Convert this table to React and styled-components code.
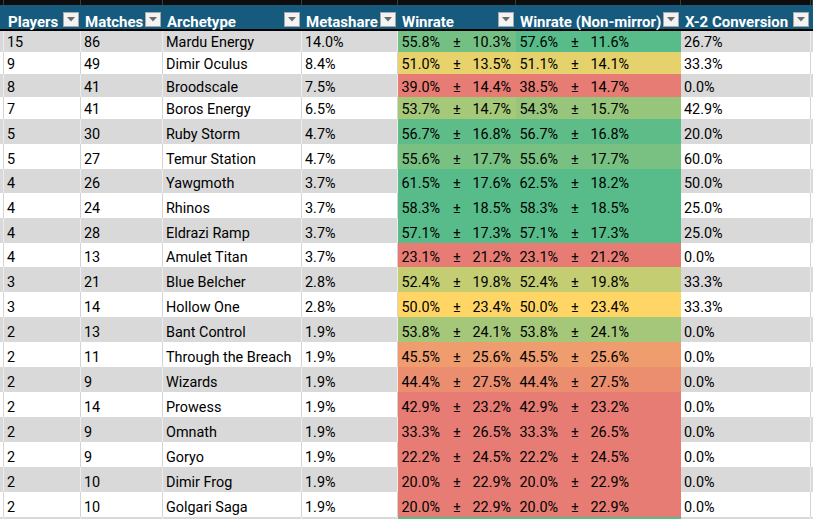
import React from "react"
import styled, { createGlobalStyle } from "styled-components"

const COLS = "4px 77px 82px 139px 96px 118px 165px 130px 1fr"

const HEADERS = [
  "Players",
  "Matches",
  "Archetype",
  "Metashare",
  "Winrate",
  "Winrate (Non-mirror)",
  "X-2 Conversion"
]

// players, matches, archetype, share, wr, wrErr, nm, nmErr, conversion
const ROWS = [
  [15, 86, "Mardu Energy", "14.0%", 55.8, 10.3, 57.6, 11.6, "26.7%"],
  [9, 49, "Dimir Oculus", "8.4%", 51.0, 13.5, 51.1, 14.1, "33.3%"],
  [8, 41, "Broodscale", "7.5%", 39.0, 14.4, 38.5, 14.7, "0.0%"],
  [7, 41, "Boros Energy", "6.5%", 53.7, 14.7, 54.3, 15.7, "42.9%"],
  [5, 30, "Ruby Storm", "4.7%", 56.7, 16.8, 56.7, 16.8, "20.0%"],
  [5, 27, "Temur Station", "4.7%", 55.6, 17.7, 55.6, 17.7, "60.0%"],
  [4, 26, "Yawgmoth", "3.7%", 61.5, 17.6, 62.5, 18.2, "50.0%"],
  [4, 24, "Rhinos", "3.7%", 58.3, 18.5, 58.3, 18.5, "25.0%"],
  [4, 28, "Eldrazi Ramp", "3.7%", 57.1, 17.3, 57.1, 17.3, "25.0%"],
  [4, 13, "Amulet Titan", "3.7%", 23.1, 21.2, 23.1, 21.2, "0.0%"],
  [3, 21, "Blue Belcher", "2.8%", 52.4, 19.8, 52.4, 19.8, "33.3%"],
  [3, 14, "Hollow One", "2.8%", 50.0, 23.4, 50.0, 23.4, "33.3%"],
  [2, 13, "Bant Control", "1.9%", 53.8, 24.1, 53.8, 24.1, "0.0%"],
  [2, 11, "Through the Breach", "1.9%", 45.5, 25.6, 45.5, 25.6, "0.0%"],
  [2, 9, "Wizards", "1.9%", 44.4, 27.5, 44.4, 27.5, "0.0%"],
  [2, 14, "Prowess", "1.9%", 42.9, 23.2, 42.9, 23.2, "0.0%"],
  [2, 9, "Omnath", "1.9%", 33.3, 26.5, 33.3, 26.5, "0.0%"],
  [2, 9, "Goryo", "1.9%", 22.2, 24.5, 22.2, 24.5, "0.0%"],
  [2, 10, "Dimir Frog", "1.9%", 20.0, 22.9, 20.0, 22.9, "0.0%"],
  [2, 10, "Golgari Saga", "1.9%", 20.0, 22.9, 20.0, 22.9, "0.0%"]
]

const HEIGHTS = [21, 22, 23, 22, 25, 25, 24, 25, 25, 24, 25, 25, 25, 25, 25, 25, 25, 25, 25, 25]

const RED = [230, 124, 115]
const YELLOW = [255, 214, 102]
const GREEN = [87, 187, 138]

// sheets-style three point colour scale
const scale = value => {
  const mix = (a, b, t) => a.map((v, i) => Math.round(v + (b[i] - v) * t))
  let rgb
  if (value <= 50) {
    const t = Math.max(0, (value - 43) / 7)
    rgb = mix(RED, YELLOW, t)
  } else {
    const t = Math.min(1, (value - 50) / 7)
    rgb = mix(YELLOW, GREEN, t)
  }
  return `rgb(${rgb.join(",")})`
}

const pct = v => v.toFixed(1) + "%"

const FilterButton = () => (
  <Filter>
    <svg width="8" height="5" viewBox="0 0 8 5">
      <path d="M0 0h8L4 4.5z" fill="#6b6b6b" />
    </svg>
  </Filter>
)

const Winrate = ({ value, err }) => (
  <WinCell style={{ background: scale(value) }}>
    <Val>{pct(value)}</Val>
    <Pm>±</Pm>
    <span>{pct(err)}</span>
  </WinCell>
)

const App = () => (
  <Page>
    <GlobalStyle />
    <TopBand>
      {Array.from({ length: 9 }).map((_, i) => (
        <BandCell key={i} />
      ))}
    </TopBand>
    <HeaderRow>
      <HeadStub />
      {HEADERS.map(h => (
        <HeadCell key={h}>
          <HeadText>{h}</HeadText>
          <FilterButton />
        </HeadCell>
      ))}
      <HeadStub />
    </HeaderRow>
    {ROWS.map((r, i) => {
      const shade = i % 2 === 0
      return (
        <Row key={r[2]} $h={HEIGHTS[i]} $shade={shade}>
          <Cell $shade={shade} />
          <Cell $shade={shade}>{r[0]}</Cell>
          <Cell $shade={shade}>{r[1]}</Cell>
          <Cell $shade={shade}>{r[2]}</Cell>
          <Cell $shade={shade}>{r[3]}</Cell>
          <Winrate value={r[4]} err={r[5]} />
          <Winrate value={r[6]} err={r[7]} />
          <Cell $shade={shade}>{r[8]}</Cell>
          <Cell $shade={shade} />
        </Row>
      )
    })}
    <Row $h={25} $shade>
      <Cell $shade />
      <Cell $shade />
      <Cell $shade />
      <Cell $shade />
      <Cell $shade />
      <WinCell style={{ background: scale(58) }} />
      <WinCell style={{ background: scale(58) }} />
      <Cell $shade />
      <Cell $shade />
    </Row>
  </Page>
)

const GlobalStyle = createGlobalStyle`
  html, body {
    margin: 0;
    padding: 0;
    background: #ffffff;
    overflow: hidden;
  }
  body {
    font-family: Roboto, "Liberation Sans", sans-serif;
    color: #000000;
  }
`

const Page = styled.div`
  width: 813px;
  height: 519px;
  overflow: hidden;
`

const TopBand = styled.div`
  display: grid;
  grid-template-columns: ${COLS};
  height: 5px;
  background: #0d0d0d;
`

const BandCell = styled.div`
  border-right: 1px solid #3c3c3c;
`

const HeaderRow = styled.div`
  display: grid;
  grid-template-columns: ${COLS};
  height: 24px;
  background: #165b7e;
  border-bottom: 2px solid #000000;
`

const HeadStub = styled.div``

const HeadCell = styled.div`
  display: flex;
  align-items: flex-end;
  justify-content: space-between;
  padding: 0 2px 0 4px;
  min-width: 0;
`

const HeadText = styled.span`
  font-size: 15px;
  font-weight: 700;
  line-height: 14px;
  color: #ffffff;
  white-space: nowrap;
`

const Filter = styled.span`
  display: flex;
  align-items: center;
  justify-content: center;
  width: 16px;
  height: 15px;
  margin-bottom: 2px;
  box-sizing: border-box;
  background: #f3f3f3;
  border: 1px solid #a8a8a8;
  flex-shrink: 0;
`

const Row = styled.div`
  display: grid;
  grid-template-columns: ${COLS};
  height: ${p => p.$h}px;
  background: ${p => (p.$shade ? "#d9d9d9" : "#ffffff")};
  font-size: 14.4px;
  line-height: 17px;
`

const Cell = styled.div`
  display: flex;
  align-items: flex-end;
  padding: 0 0 1px 3px;
  border-right: 1px solid ${p => (p.$shade ? "#ececec" : "#d4d4d4")};
  white-space: nowrap;
  overflow: hidden;
`

const WinCell = styled.div`
  display: flex;
  align-items: flex-end;
  padding: 0 0 1px 3.5px;
  white-space: nowrap;
  overflow: hidden;
`

const Val = styled.span`
  width: 51.5px;
`

const Pm = styled.span`
  width: 19.5px;
`

export default App
